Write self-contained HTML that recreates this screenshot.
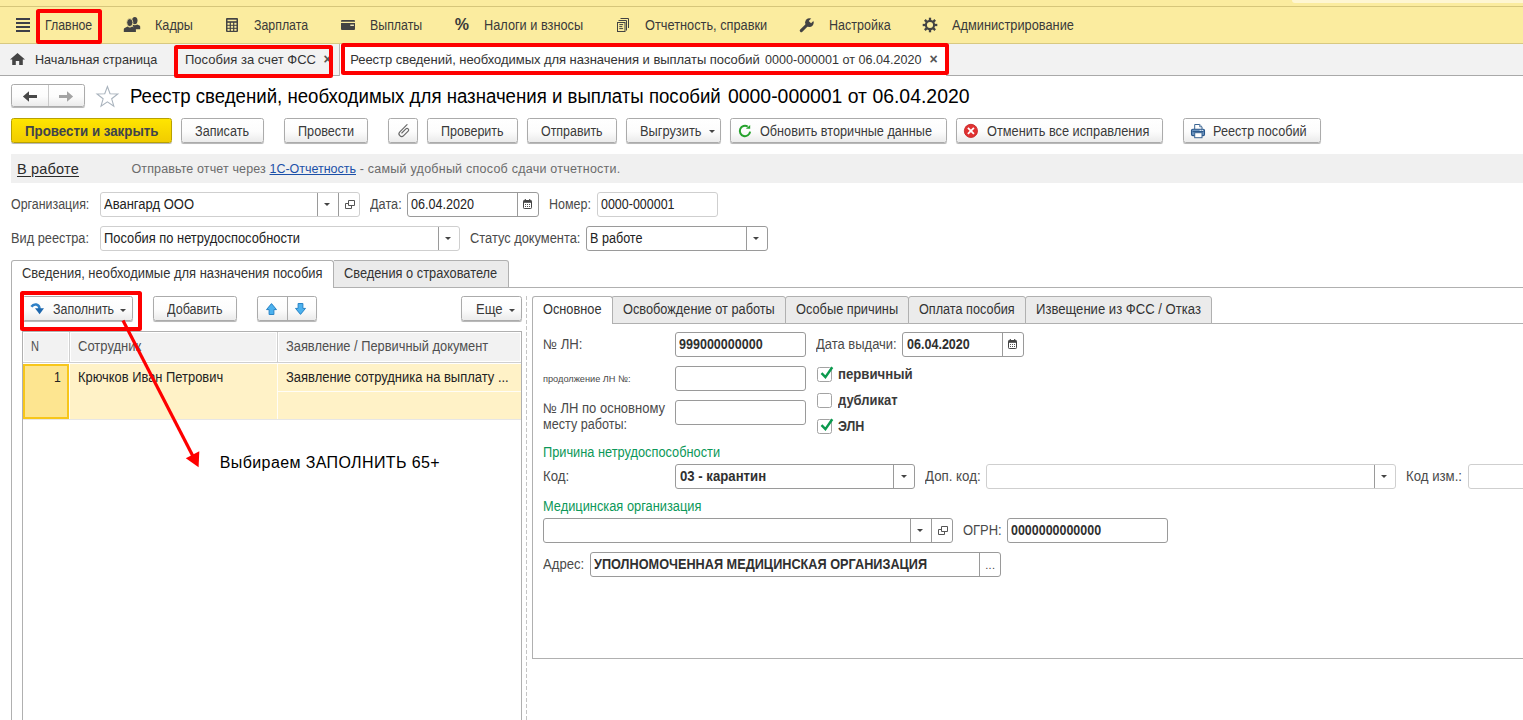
<!DOCTYPE html>
<html lang="ru"><head><meta charset="utf-8"><title>Реестр сведений</title>
<style>
*{box-sizing:border-box;margin:0;padding:0}
html,body{width:1523px;height:720px;overflow:hidden;background:#fff}
body{font-family:"Liberation Sans",Arial,sans-serif;font-size:13px;color:#333;position:relative}
.a{position:absolute;white-space:pre}
.red{border:4px solid #fe0000;border-radius:2.5px}
.btn{border:1px solid #ababab;border-radius:2.5px;background:linear-gradient(#ffffff 0%,#fcfcfc 55%,#ebebeb 100%);box-shadow:0 1px 0 rgba(0,0,0,.2),0 1px 1px rgba(0,0,0,.1)}
.btn.y{background:linear-gradient(#ffe500,#f1cc00);border-color:#b8a100}
.inp{border:1px solid #9a9a9a;border-radius:3px;background:#fff}
.inp.l{border-color:#cfcfcf}
.dv{position:absolute;top:0;bottom:0;width:1px;background:#9a9a9a}
svg{position:absolute;overflow:visible}
</style></head><body>
<div class="a " style="left:0px;top:0px;width:1523px;height:44px;background:#fbec9f"></div>
<div class="a " style="left:0px;top:43px;width:1523px;height:1px;background:#d8c981"></div>
<div class="a " style="left:0px;top:6px;width:1523px;height:1px;background:#d6c67a"></div>
<div class="a " style="left:1292px;top:0px;width:231px;height:3px;background:#fef6d2;border-bottom-left-radius:3px"></div>
<svg class="a" style="left:16px;top:18px" width="14" height="14" viewBox="0 0 14 14"><path d="M0 1h14M0 5h14M0 9h14M0 13h14" stroke="#3d3f48" stroke-width="2" fill="none"/></svg>
<div class="a" style="left:45.2px;top:15px;font-size:14px;line-height:20px;color:#3a3a3a;transform:scaleX(0.8822);transform-origin:0 50%;">Главное</div>
<div class="a" style="left:154.6px;top:15px;font-size:14px;line-height:20px;color:#3a3a3a;transform:scaleX(0.9031);transform-origin:0 50%;">Кадры</div>
<div class="a" style="left:254.4px;top:15px;font-size:14px;line-height:20px;color:#3a3a3a;transform:scaleX(0.8824);transform-origin:0 50%;">Зарплата</div>
<div class="a" style="left:370.2px;top:15px;font-size:14px;line-height:20px;color:#3a3a3a;transform:scaleX(0.8831);transform-origin:0 50%;">Выплаты</div>
<div class="a" style="left:454.7px;top:15px;font-size:16px;line-height:20px;color:#3a3a3a;font-weight:bold;letter-spacing:0.066px;">%</div>
<div class="a" style="left:484.4px;top:15px;font-size:14px;line-height:20px;color:#3a3a3a;transform:scaleX(0.9106);transform-origin:0 50%;">Налоги и взносы</div>
<div class="a" style="left:645.3px;top:15px;font-size:14px;line-height:20px;color:#3a3a3a;transform:scaleX(0.9128);transform-origin:0 50%;">Отчетность, справки</div>
<div class="a" style="left:828.8px;top:15px;font-size:14px;line-height:20px;color:#3a3a3a;transform:scaleX(0.8938);transform-origin:0 50%;">Настройка</div>
<div class="a" style="left:951.7px;top:15px;font-size:14px;line-height:20px;color:#3a3a3a;transform:scaleX(0.9131);transform-origin:0 50%;">Администрирование</div>
<div class="a " style="left:0px;top:44px;width:1523px;height:32px;background:#f2f2f2"></div>
<div class="a " style="left:0px;top:75px;width:1523px;height:1px;background:#a9a9a9"></div>
<div class="a " style="left:339px;top:44px;width:608px;height:32px;background:#fff;border-left:1px solid #b5b5b5;border-right:1px solid #b5b5b5"></div>
<div class="a" style="left:35.4px;top:50px;font-size:13px;line-height:20px;color:#333;transform:scaleX(0.9714);transform-origin:0 50%;">Начальная страница</div>
<div class="a" style="left:185.0px;top:50px;font-size:13px;line-height:20px;color:#333;letter-spacing:0.012px;">Пособия за счет ФСС</div>
<div class="a" style="left:350.2px;top:50px;font-size:13px;line-height:20px;color:#333;letter-spacing:-0.042px;">Реестр сведений, необходимых для назначения и выплаты пособий</div>
<div class="a" style="left:765.1px;top:50px;font-size:13px;line-height:20px;color:#333;transform:scaleX(0.9665);transform-origin:0 50%;">0000-000001 от 06.04.2020</div>
<div class="a" style="left:323.5px;top:49px;font-size:14px;line-height:20px;color:#555;font-weight:bold;">×</div>
<div class="a" style="left:929.5px;top:49px;font-size:14px;line-height:20px;color:#555;font-weight:bold;">×</div>
<div class="a red" style="left:36px;top:9px;width:66px;height:35px;"></div>
<div class="a red" style="left:174px;top:45px;width:159px;height:33px;"></div>
<div class="a red" style="left:341px;top:43px;width:608px;height:32px;"></div>
<div class="a btn" style="left:11px;top:84px;width:74px;height:23px;"><div class="dv" style="left:36px;background:#c9c9c9"></div></div>
<svg class="a" style="left:22px;top:90px" width="16" height="13" viewBox="0 0 16 13"><path d="M.9 6.500L7 1.200V5h8v3H7v3.800z" fill="#484848"/></svg>
<svg class="a" style="left:58px;top:90px" width="16" height="13" viewBox="0 0 16 13"><path d="M15.100 6.500L9 1.200V5H1v3h8v3.800z" fill="#a3a3a3"/></svg>
<svg class="a" style="left:95px;top:84px" width="25" height="24" viewBox="0 0 25 24"><path d="M12.40 2.50L15.05 9.76L22.77 10.03L16.68 14.79L18.81 22.22L12.40 17.90L5.99 22.22L8.12 14.79L2.03 10.03L9.75 9.76Z" stroke="#a9b3bd" stroke-width="1.100" fill="#fff" stroke-linejoin="miter" stroke-miterlimit="10"/></svg>
<div class="a" style="left:130.2px;top:86px;font-size:20px;line-height:20px;color:#000;transform:scaleX(0.9321);transform-origin:0 50%;">Реестр сведений, необходимых для назначения и выплаты пособий</div>
<div class="a" style="left:727.5px;top:86px;font-size:20px;line-height:20px;color:#000;transform:scaleX(0.9701);transform-origin:0 50%;">0000-000001 от 06.04.2020</div>
<div class="a btn y" style="left:11px;top:118px;width:161px;height:25px;"></div>
<div class="a" style="left:25.0px;top:121px;font-size:14px;line-height:20px;color:#40434c;font-weight:bold;transform:scaleX(0.9510);transform-origin:0 50%;">Провести и закрыть</div>
<div class="a btn" style="left:181px;top:118px;width:82.5px;height:25px;"></div>
<div class="a" style="left:195.0px;top:121px;font-size:14px;line-height:20px;color:#3a3a3a;transform:scaleX(0.9026);transform-origin:0 50%;">Записать</div>
<div class="a btn" style="left:284px;top:118px;width:84px;height:25px;"></div>
<div class="a" style="left:298.0px;top:121px;font-size:14px;line-height:20px;color:#3a3a3a;transform:scaleX(0.9041);transform-origin:0 50%;">Провести</div>
<div class="a btn" style="left:388px;top:118px;width:30px;height:25px;"></div>
<div class="a btn" style="left:427px;top:118px;width:91px;height:25px;"></div>
<div class="a" style="left:441.0px;top:121px;font-size:14px;line-height:20px;color:#3a3a3a;transform:scaleX(0.8941);transform-origin:0 50%;">Проверить</div>
<div class="a btn" style="left:527px;top:118px;width:90px;height:25px;"></div>
<div class="a" style="left:541.0px;top:121px;font-size:14px;line-height:20px;color:#3a3a3a;transform:scaleX(0.8873);transform-origin:0 50%;">Отправить</div>
<div class="a btn" style="left:626px;top:118px;width:95px;height:25px;"></div>
<div class="a" style="left:640.0px;top:121px;font-size:14px;line-height:20px;color:#3a3a3a;transform:scaleX(0.9166);transform-origin:0 50%;">Выгрузить</div>
<div class="a btn" style="left:730px;top:118px;width:217px;height:25px;"></div>
<div class="a" style="left:760.2px;top:121px;font-size:14px;line-height:20px;color:#3a3a3a;transform:scaleX(0.9048);transform-origin:0 50%;">Обновить вторичные данные</div>
<div class="a btn" style="left:956px;top:118px;width:207px;height:25px;"></div>
<div class="a" style="left:986.6px;top:121px;font-size:14px;line-height:20px;color:#3a3a3a;transform:scaleX(0.9124);transform-origin:0 50%;">Отменить все исправления</div>
<div class="a btn" style="left:1183px;top:118px;width:138px;height:25px;"></div>
<div class="a" style="left:1213.3px;top:121px;font-size:14px;line-height:20px;color:#3a3a3a;transform:scaleX(0.9065);transform-origin:0 50%;">Реестр пособий</div>
<div class="a " style="left:11px;top:154px;width:1512px;height:29px;background:#f0f0f0"></div>
<div class="a" style="left:17.0px;top:159px;font-size:14.5px;line-height:20px;color:#2b2b2b;letter-spacing:0.197px;text-decoration:underline;text-underline-offset:2px">В работе</div>
<div class="a" style="left:131.5px;top:159px;font-size:12.5px;line-height:20px;color:#6b6b6b;letter-spacing:0.124px;">Отправьте отчет через </div>
<div class="a" style="left:269.5px;top:159px;font-size:12.5px;line-height:20px;color:#1c50a8;letter-spacing:-0.017px;text-decoration:underline">1С-Отчетность</div>
<div class="a" style="left:356.0px;top:159px;font-size:12.5px;line-height:20px;color:#6b6b6b;letter-spacing:0.243px;"> - самый удобный способ сдачи отчетности.</div>
<svg class="a" style="left:123px;top:16px" width="18" height="17" viewBox="0 0 18 17"><g fill="#434343"><ellipse cx="11.8" cy="4.6" rx="2.7" ry="3.600"/><path d="M9.500 8.500c1.500 1 3.300 1 4.600 0l2.400 1.100c.5.300.7.700.7 1.200v2.500h-6.200z"/><ellipse cx="6.800" cy="6.600" rx="3.100" ry="4" stroke="#fbec9f" stroke-width=".8"/><path d="M.8 16v-2.700c0-.7.300-1.100.9-1.400l2.900-1.300c1.400 1.200 3.200 1.200 4.500 0l2.900 1.300c.6.300.9.700.9 1.400V16z"/></g></svg>
<svg class="a" style="left:226px;top:18px" width="12" height="14" viewBox="0 0 12 14"><rect x="0" y="0" width="12" height="14" rx="1" fill="#434343"/><rect x="1.500" y="1.700" width="9" height="1.500" fill="#fbec9f"/><g fill="#fbec9f"><rect x="1.500" y="4.800" width="2.200" height="2"/><rect x="4.900" y="4.800" width="2.200" height="2"/><rect x="8.300" y="4.800" width="2.200" height="2"/><rect x="1.500" y="7.800" width="2.200" height="2"/><rect x="4.900" y="7.800" width="2.200" height="2"/><rect x="8.300" y="7.800" width="2.200" height="2"/><rect x="1.500" y="10.800" width="2.200" height="2"/><rect x="4.900" y="10.800" width="2.200" height="2"/><rect x="8.300" y="10.800" width="2.200" height="2"/></g></svg>
<svg class="a" style="left:341px;top:20px" width="14" height="10" viewBox="0 0 14 10"><path d="M1 0h12a1 1 0 0 1 1 1v.8H0V1a1 1 0 0 1 1-1z" fill="#434343"/><path d="M0 3h14v6a1 1 0 0 1-1 1H1a1 1 0 0 1-1-1z" fill="#434343"/><rect x="9.300" y="4.600" width="3.600" height="1.300" fill="#fff6c8"/></svg>
<svg class="a" style="left:617px;top:18px" width="13" height="14" viewBox="0 0 13 14"><g fill="none" stroke="#434343" stroke-width="1"><rect x=".5" y="4.500" width="7.500" height="9"/><path d="M1.500 2.500h8v10M3.500 .5h8v9.500"/><path d="M2.300 6.600h3.800M2.300 8.600h3M2.300 10.600h3.800" /></g></svg>
<svg class="a" style="left:799px;top:17px" width="16" height="16" viewBox="0 0 16 16"><path d="M2.300 13.700L9 7" stroke="#434343" stroke-width="3.100" stroke-linecap="round"/><circle cx="10.400" cy="5.600" r="4.300" fill="#434343"/><path d="M10.900 5.100L16 0" stroke="#fbec9f" stroke-width="3.300"/></svg>
<svg class="a" style="left:922px;top:17px" width="16" height="16" viewBox="0 0 16 16"><g fill="#434343"><rect x="6.85" y="0.70" width="2.3" height="2.80" transform="rotate(0.0 8 8)"/><rect x="6.85" y="0.70" width="2.3" height="2.80" transform="rotate(45.0 8 8)"/><rect x="6.85" y="0.70" width="2.3" height="2.80" transform="rotate(90.0 8 8)"/><rect x="6.85" y="0.70" width="2.3" height="2.80" transform="rotate(135.0 8 8)"/><rect x="6.85" y="0.70" width="2.3" height="2.80" transform="rotate(180.0 8 8)"/><rect x="6.85" y="0.70" width="2.3" height="2.80" transform="rotate(225.0 8 8)"/><rect x="6.85" y="0.70" width="2.3" height="2.80" transform="rotate(270.0 8 8)"/><rect x="6.85" y="0.70" width="2.3" height="2.80" transform="rotate(315.0 8 8)"/></g><circle cx="8" cy="8" r="4.100" fill="none" stroke="#434343" stroke-width="2.100"/></svg>
<svg class="a" style="left:10px;top:53px" width="15" height="12" viewBox="0 0 15 12"><path d="M7.500 0L0 6.500h2.200V12h3.600V8h3.400v4h3.600V6.500H15z" fill="#454545"/></svg>
<div class="a" style="left:11.0px;top:194px;font-size:14px;line-height:20px;color:#4a4a4a;transform:scaleX(0.8865);transform-origin:0 50%;">Организация:</div>
<div class="a inp l" style="left:100px;top:192px;width:260px;height:25px;"><div class="dv" style="left:216px"></div><div class="dv" style="left:237px"></div></div>
<div class="a" style="left:104.0px;top:194px;font-size:14px;line-height:20px;color:#222;transform:scaleX(0.9286);transform-origin:0 50%;">Авангард ООО</div>
<svg class="a" style="left:324.4px;top:203.0px" width="6" height="3" viewBox="0 0 6 3"><path d="M0 0h6L3.0 3z" fill="#444"/></svg>
<svg class="a" style="left:344.5px;top:199.5px" width="10" height="10" viewBox="0 0 10 10"><path d="M3.500 .5h6v5h-6zM3.500 3.500h-3v5h6v-3" stroke="#555" stroke-width="1" fill="none"/></svg>
<div class="a" style="left:369.8px;top:194px;font-size:14px;line-height:20px;color:#4a4a4a;transform:scaleX(0.9086);transform-origin:0 50%;">Дата:</div>
<div class="a inp" style="left:407px;top:192px;width:132px;height:25px;"><div class="dv" style="left:109px"></div></div>
<div class="a" style="left:411.0px;top:194px;font-size:14px;line-height:20px;color:#222;transform:scaleX(0.8990);transform-origin:0 50%;">06.04.2020</div>
<svg class="a" style="left:523px;top:199.0px" width="9" height="10" viewBox="0 0 9 10"><rect x=".5" y="1.500" width="8" height="8" rx=".8" fill="#fff" stroke="#444"/><rect x=".5" y="1.500" width="8" height="2.300" fill="#444"/><path d="M2.300 0v2M6.700 0v2" stroke="#444" stroke-width="1.100"/><g fill="#555"><rect x="2" y="5" width="1" height="1"/><rect x="4" y="5" width="1" height="1"/><rect x="6" y="5" width="1" height="1"/><rect x="2" y="7" width="1" height="1"/><rect x="4" y="7" width="1" height="1"/><rect x="6" y="7" width="1" height="1"/></g></svg>
<div class="a" style="left:548.9px;top:194px;font-size:14px;line-height:20px;color:#4a4a4a;transform:scaleX(0.8918);transform-origin:0 50%;">Номер:</div>
<div class="a inp l" style="left:597px;top:192px;width:121px;height:25px;"></div>
<div class="a" style="left:601.0px;top:194px;font-size:14px;line-height:20px;color:#222;transform:scaleX(0.8906);transform-origin:0 50%;">0000-000001</div>
<div class="a" style="left:11.0px;top:228px;font-size:14px;line-height:20px;color:#4a4a4a;transform:scaleX(0.9128);transform-origin:0 50%;">Вид реестра:</div>
<div class="a inp l" style="left:100px;top:226px;width:360px;height:25px;"><div class="dv" style="left:337px"></div></div>
<div class="a" style="left:104.0px;top:228px;font-size:14px;line-height:20px;color:#222;transform:scaleX(0.9201);transform-origin:0 50%;">Пособия по нетрудоспособности</div>
<svg class="a" style="left:445.4px;top:237.0px" width="6" height="3" viewBox="0 0 6 3"><path d="M0 0h6L3.0 3z" fill="#444"/></svg>
<div class="a" style="left:470.0px;top:228px;font-size:14px;line-height:20px;color:#4a4a4a;transform:scaleX(0.9176);transform-origin:0 50%;">Статус документа:</div>
<div class="a inp" style="left:586px;top:226px;width:182px;height:25px;"><div class="dv" style="left:159px"></div></div>
<div class="a" style="left:590.0px;top:228px;font-size:14px;line-height:20px;color:#222;transform:scaleX(0.8998);transform-origin:0 50%;">В работе</div>
<svg class="a" style="left:753.4px;top:237.0px" width="6" height="3" viewBox="0 0 6 3"><path d="M0 0h6L3.0 3z" fill="#444"/></svg>
<div class="a " style="left:11px;top:287px;width:1512px;height:1px;background:#b0b0b0"></div>
<div class="a " style="left:11px;top:287px;width:1px;height:433px;background:#b0b0b0"></div>
<div class="a " style="left:334px;top:260px;width:175px;height:28px;background:#ebebeb;border:1px solid #b0b0b0;border-left:none;border-top-right-radius:3px"></div>
<div class="a " style="left:11px;top:260px;width:323px;height:28px;background:#fff;border:1px solid #b0b0b0;border-bottom:none;border-radius:3px 3px 0 0"></div>
<div class="a" style="left:22.0px;top:263px;font-size:14px;line-height:20px;color:#333;transform:scaleX(0.9252);transform-origin:0 50%;">Сведения, необходимые для назначения пособия</div>
<div class="a" style="left:344.3px;top:263px;font-size:14px;line-height:20px;color:#333;transform:scaleX(0.9150);transform-origin:0 50%;">Сведения о страхователе</div>
<div class="a btn" style="left:22px;top:296px;width:111px;height:25px;"></div>
<div class="a" style="left:52.7px;top:299px;font-size:14px;line-height:20px;color:#3a3a3a;transform:scaleX(0.8889);transform-origin:0 50%;">Заполнить</div>
<svg class="a" style="left:120.0px;top:309.0px" width="6" height="3" viewBox="0 0 6 3"><path d="M0 0h6L3.0 3z" fill="#444"/></svg>
<div class="a btn" style="left:153px;top:296px;width:83.5px;height:25px;"></div>
<div class="a" style="left:166.7px;top:299px;font-size:14px;line-height:20px;color:#3a3a3a;transform:scaleX(0.8970);transform-origin:0 50%;">Добавить</div>
<div class="a btn" style="left:257px;top:296px;width:60px;height:25px;"><div class="dv" style="left:29px;background:#ababab"></div></div>
<div class="a btn" style="left:461px;top:296px;width:61px;height:25px;"></div>
<div class="a" style="left:475.6px;top:299px;font-size:14px;line-height:20px;color:#3a3a3a;transform:scaleX(0.9333);transform-origin:0 50%;">Еще</div>
<svg class="a" style="left:509.20000000000005px;top:309.0px" width="6" height="3" viewBox="0 0 6 3"><path d="M0 0h6L3.0 3z" fill="#444"/></svg>
<svg class="a" style="left:30px;top:302px" width="15" height="13" viewBox="0 0 15 13"><path d="M1.400 4.800C3.800 1.300 9.300 1.600 9.600 7" stroke="#2f80c6" stroke-width="2.500" fill="none"/><path d="M5 6.300h9L9.600 12.200z" fill="#1f68ae"/></svg>
<svg class="a" style="left:266px;top:303px" width="11" height="12" viewBox="0 0 11 12"><path d="M5.500 .6L10.500 6.600H7.900V11.500H3.100V6.600H.5z" fill="#4bb1ee" stroke="#2a84c6" stroke-width="1" stroke-linejoin="miter"/></svg>
<svg class="a" style="left:295px;top:303px" width="11" height="12" viewBox="0 0 11 12"><path d="M5.500 .6L10.500 6.600H7.900V11.500H3.100V6.600H.5z" transform="rotate(180 5.500 6)" fill="#4bb1ee" stroke="#2a84c6" stroke-width="1" stroke-linejoin="miter"/></svg>
<div class="a " style="left:22px;top:331px;width:500px;height:389px;border:1px solid #b0b0b0;border-bottom:none;background:#fff"></div>
<div class="a " style="left:23px;top:332px;width:46px;height:30px;background:#f2f2f2;border:1px solid #fff"></div>
<div class="a " style="left:70px;top:332px;width:207px;height:30px;background:#f2f2f2;border:1px solid #fff"></div>
<div class="a " style="left:278px;top:332px;width:243px;height:30px;background:#f2f2f2;border:1px solid #fff"></div>
<div class="a " style="left:23px;top:362px;width:498px;height:1px;background:#cfcfcf"></div>
<div class="a " style="left:69px;top:332px;width:1px;height:31px;background:#cfcfcf"></div>
<div class="a " style="left:277px;top:332px;width:1px;height:31px;background:#cfcfcf"></div>
<div class="a" style="left:31.2px;top:336px;font-size:14px;line-height:20px;color:#4f4f4f;transform:scaleX(0.7901);transform-origin:0 50%;">N</div>
<div class="a" style="left:77.8px;top:336px;font-size:14px;line-height:20px;color:#4f4f4f;transform:scaleX(0.9292);transform-origin:0 50%;">Сотрудник</div>
<div class="a" style="left:286.2px;top:336px;font-size:14px;line-height:20px;color:#4f4f4f;transform:scaleX(0.9181);transform-origin:0 50%;">Заявление / Первичный документ</div>
<div class="a " style="left:23px;top:364px;width:498px;height:55px;background:#fff2c7"></div>
<div class="a " style="left:23px;top:419px;width:498px;height:1px;background:#e6e6e6"></div>
<div class="a " style="left:69px;top:364px;width:1px;height:55px;background:#fffdf6"></div>
<div class="a " style="left:277px;top:364px;width:1px;height:55px;background:#fffdf6"></div>
<div class="a " style="left:278px;top:391px;width:243px;height:1px;background:#fffdf6"></div>
<div class="a " style="left:23px;top:364px;width:46px;height:55px;background:#fde590;border:2px solid #f7c61a"></div>
<div class="a" style="left:54.0px;top:367px;font-size:14px;line-height:20px;color:#222;transform:scaleX(0.8721);transform-origin:0 50%;">1</div>
<div class="a" style="left:78.2px;top:367px;font-size:14px;line-height:20px;color:#222;transform:scaleX(0.9213);transform-origin:0 50%;">Крючков Иван Петрович</div>
<div class="a" style="left:286.2px;top:367px;font-size:14px;line-height:20px;color:#222;transform:scaleX(0.9262);transform-origin:0 50%;">Заявление сотрудника на выплату ...</div>
<div class="a " style="left:526px;top:296px;width:1px;height:424px;background:repeating-linear-gradient(#c4c4c4 0 4px,#fff 4px 6px)"></div>
<div class="a " style="left:532px;top:323px;width:991px;height:336px;border:1px solid #b0b0b0;border-right:none;background:#fff"></div>
<div class="a " style="left:611px;top:296px;width:174.5px;height:28px;background:#ebebeb;border:1px solid #b0b0b0;border-radius:3px 3px 0 0"></div>
<div class="a" style="left:622.7px;top:299px;font-size:14px;line-height:20px;color:#333;transform:scaleX(0.9118);transform-origin:0 50%;">Освобождение от работы</div>
<div class="a " style="left:784.5px;top:296px;width:124.0px;height:28px;background:#ebebeb;border:1px solid #b0b0b0;border-radius:3px 3px 0 0"></div>
<div class="a" style="left:795.7px;top:299px;font-size:14px;line-height:20px;color:#333;transform:scaleX(0.9142);transform-origin:0 50%;">Особые причины</div>
<div class="a " style="left:907.5px;top:296px;width:118.0px;height:28px;background:#ebebeb;border:1px solid #b0b0b0;border-radius:3px 3px 0 0"></div>
<div class="a" style="left:919.0px;top:299px;font-size:14px;line-height:20px;color:#333;transform:scaleX(0.9047);transform-origin:0 50%;">Оплата пособия</div>
<div class="a " style="left:1024.5px;top:296px;width:187.0px;height:28px;background:#ebebeb;border:1px solid #b0b0b0;border-radius:3px 3px 0 0"></div>
<div class="a" style="left:1035.8px;top:299px;font-size:14px;line-height:20px;color:#333;transform:scaleX(0.9349);transform-origin:0 50%;">Извещение из ФСС / Отказ</div>
<div class="a " style="left:532px;top:296px;width:80.5px;height:28px;background:#fff;border:1px solid #b0b0b0;border-bottom:none;border-radius:3px 3px 0 0"></div>
<div class="a" style="left:543.0px;top:299px;font-size:14px;line-height:20px;color:#333;transform:scaleX(0.9118);transform-origin:0 50%;">Основное</div>
<div class="a" style="left:543.0px;top:334px;font-size:14px;line-height:20px;color:#4a4a4a;transform:scaleX(0.9380);transform-origin:0 50%;">№ ЛН:</div>
<div class="a inp" style="left:675px;top:332px;width:131px;height:25px;"></div>
<div class="a" style="left:678.5px;top:334px;font-size:14px;line-height:20px;color:#303030;font-weight:bold;transform:scaleX(0.8958);transform-origin:0 50%;">999000000000</div>
<div class="a" style="left:815.6px;top:334px;font-size:14px;line-height:20px;color:#4a4a4a;transform:scaleX(0.9271);transform-origin:0 50%;">Дата выдачи:</div>
<div class="a inp" style="left:902px;top:332px;width:122px;height:25px;"><div class="dv" style="left:99px"></div></div>
<div class="a" style="left:906.9px;top:334px;font-size:14px;line-height:20px;color:#303030;font-weight:bold;transform:scaleX(0.8961);transform-origin:0 50%;">06.04.2020</div>
<svg class="a" style="left:1008px;top:339.0px" width="9" height="10" viewBox="0 0 9 10"><rect x=".5" y="1.500" width="8" height="8" rx=".8" fill="#fff" stroke="#444"/><rect x=".5" y="1.500" width="8" height="2.300" fill="#444"/><path d="M2.300 0v2M6.700 0v2" stroke="#444" stroke-width="1.100"/><g fill="#555"><rect x="2" y="5" width="1" height="1"/><rect x="4" y="5" width="1" height="1"/><rect x="6" y="5" width="1" height="1"/><rect x="2" y="7" width="1" height="1"/><rect x="4" y="7" width="1" height="1"/><rect x="6" y="7" width="1" height="1"/></g></svg>
<div class="a" style="left:543.0px;top:369px;font-size:9.5px;line-height:20px;color:#4a4a4a;transform:scaleX(0.9685);transform-origin:0 50%;">продолжение ЛН №:</div>
<div class="a inp" style="left:675px;top:366px;width:131px;height:25px;"></div>
<div class="a" style="left:543.0px;top:398px;font-size:14px;line-height:20px;color:#4a4a4a;transform:scaleX(0.9284);transform-origin:0 50%;">№ ЛН по основному</div>
<div class="a" style="left:543.0px;top:414px;font-size:14px;line-height:20px;color:#4a4a4a;transform:scaleX(0.9002);transform-origin:0 50%;">месту работы:</div>
<div class="a inp" style="left:675px;top:400px;width:131px;height:25px;"></div>
<div class="a " style="left:817px;top:367px;width:15px;height:15px;border:1px solid #a3a3a3;border-radius:2.5px;background:#fff"><svg style="left:2px;top:-2px" width="14" height="14" viewBox="0 0 14 14"><path d="M1.500 7.200l3.900 3.900L12.300 1.200" stroke="#0b9a4e" stroke-width="2.400" fill="none"/></svg></div>
<div class="a " style="left:817px;top:393px;width:15px;height:15px;border:1px solid #a3a3a3;border-radius:2.5px;background:#fff"></div>
<div class="a " style="left:817px;top:419px;width:15px;height:15px;border:1px solid #a3a3a3;border-radius:2.5px;background:#fff"><svg style="left:2px;top:-2px" width="14" height="14" viewBox="0 0 14 14"><path d="M1.500 7.200l3.900 3.900L12.300 1.200" stroke="#0b9a4e" stroke-width="2.400" fill="none"/></svg></div>
<div class="a" style="left:838.3px;top:364px;font-size:14px;line-height:20px;color:#3a3a3a;font-weight:bold;transform:scaleX(0.9424);transform-origin:0 50%;">первичный</div>
<div class="a" style="left:838.3px;top:390px;font-size:14px;line-height:20px;color:#3a3a3a;font-weight:bold;transform:scaleX(0.9254);transform-origin:0 50%;">дубликат</div>
<div class="a" style="left:838.3px;top:416px;font-size:14px;line-height:20px;color:#3a3a3a;font-weight:bold;transform:scaleX(0.8953);transform-origin:0 50%;">ЭЛН</div>
<div class="a" style="left:543.2px;top:442px;font-size:14px;line-height:20px;color:#0c9859;transform:scaleX(0.9135);transform-origin:0 50%;">Причина нетрудоспособности</div>
<div class="a" style="left:543.2px;top:466px;font-size:14px;line-height:20px;color:#4a4a4a;transform:scaleX(0.9457);transform-origin:0 50%;">Код:</div>
<div class="a inp" style="left:675px;top:464px;width:240px;height:25px;"><div class="dv" style="left:217px"></div></div>
<div class="a" style="left:679.7px;top:466px;font-size:14px;line-height:20px;color:#303030;font-weight:bold;transform:scaleX(0.9407);transform-origin:0 50%;">03 - карантин</div>
<svg class="a" style="left:900.5px;top:475.0px" width="6" height="3" viewBox="0 0 6 3"><path d="M0 0h6L3.0 3z" fill="#444"/></svg>
<div class="a" style="left:924.9px;top:466px;font-size:14px;line-height:20px;color:#4a4a4a;transform:scaleX(0.9487);transform-origin:0 50%;">Доп. код:</div>
<div class="a inp l" style="left:986px;top:464px;width:410px;height:25px;"><div class="dv" style="left:387px"></div></div>
<svg class="a" style="left:1381.4px;top:475.0px" width="6" height="3" viewBox="0 0 6 3"><path d="M0 0h6L3.0 3z" fill="#444"/></svg>
<div class="a" style="left:1406.2px;top:466px;font-size:14px;line-height:20px;color:#4a4a4a;transform:scaleX(0.9437);transform-origin:0 50%;">Код изм.:</div>
<div class="a inp l" style="left:1468px;top:464px;width:92px;height:25px;"></div>
<div class="a" style="left:543.2px;top:496px;font-size:14px;line-height:20px;color:#0c9859;transform:scaleX(0.9162);transform-origin:0 50%;">Медицинская организация</div>
<div class="a inp" style="left:543px;top:518px;width:410px;height:25px;"><div class="dv" style="left:366px"></div><div class="dv" style="left:387px"></div></div>
<svg class="a" style="left:917.4px;top:529.0px" width="6" height="3" viewBox="0 0 6 3"><path d="M0 0h6L3.0 3z" fill="#444"/></svg>
<svg class="a" style="left:937.5px;top:525.5px" width="10" height="10" viewBox="0 0 10 10"><path d="M3.500 .5h6v5h-6zM3.500 3.500h-3v5h6v-3" stroke="#555" stroke-width="1" fill="none"/></svg>
<div class="a" style="left:963.0px;top:520px;font-size:14px;line-height:20px;color:#4a4a4a;transform:scaleX(0.9256);transform-origin:0 50%;">ОГРН:</div>
<div class="a inp" style="left:1007px;top:518px;width:161px;height:25px;"></div>
<div class="a" style="left:1011.4px;top:520px;font-size:14px;line-height:20px;color:#303030;font-weight:bold;transform:scaleX(0.8900);transform-origin:0 50%;">0000000000000</div>
<div class="a" style="left:543.2px;top:554px;font-size:14px;line-height:20px;color:#4a4a4a;transform:scaleX(0.9370);transform-origin:0 50%;">Адрес:</div>
<div class="a inp" style="left:590px;top:552px;width:411px;height:25px;"><div class="dv" style="left:388px"></div></div>
<div class="a" style="left:594.3px;top:554px;font-size:14px;line-height:20px;color:#303030;font-weight:bold;transform:scaleX(0.9074);transform-origin:0 50%;">УПОЛНОМОЧЕННАЯ МЕДИЦИНСКАЯ ОРГАНИЗАЦИЯ</div>
<div class="a" style="left:985.3px;top:555px;font-size:11px;line-height:20px;color:#444;letter-spacing:.25px;">...</div>
<svg class="a" style="left:0;top:0" width="1523" height="720" viewBox="0 0 1523 720"><path d="M123 320.600L193.500 457.200" stroke="#fe0000" stroke-width="3.200" fill="none"/><path d="M198.600 467.200L185.800 458.200 199.300 451.300z" fill="#fe0000"/></svg>
<div class="a" style="left:219.8px;top:453px;font-size:16px;line-height:20px;color:#000;letter-spacing:0.384px;">Выбираем ЗАПОЛНИТЬ 65+</div>
<div class="a red" style="left:20px;top:291px;width:122px;height:40px;"></div>
<svg class="a" style="left:396.5px;top:124px" width="14" height="15" viewBox="-7 -7.500 14 15"><g transform="rotate(45)"><path d="M-2.700 -7V3.200A2.700 2.700 0 0 0 2.700 3.200V-3.200A1.600 1.600 0 0 0 -.5 -3.200V2.600" stroke="#6a6a6a" stroke-width="1.200" fill="none" stroke-linecap="round"/></g></svg>
<svg class="a" style="left:708.8px;top:130.0px" width="6" height="3" viewBox="0 0 6 3"><path d="M0 0h6L3.0 3z" fill="#444"/></svg>
<svg class="a" style="left:738px;top:124px" width="14" height="14" viewBox="0 0 14 14"><path d="M12.100 7.600A5.150 5.150 0 1 1 9.700 2.600" stroke="#25a22c" stroke-width="2" fill="none"/><path d="M12.200 1v3.700H7.900z" fill="#25a22c"/></svg>
<svg class="a" style="left:963px;top:123px" width="16" height="16" viewBox="0 0 16 16"><circle cx="7.900" cy="7.900" r="6.600" fill="#e03232" stroke="#c41d1d" stroke-width=".8"/><path d="M4.900 4.900l6 6M10.900 4.900l-6 6" stroke="#fff" stroke-width="1.800"/></svg>
<svg class="a" style="left:1190px;top:123px" width="16" height="16" viewBox="0 0 16 16"><path d="M4.700 6V1.500h5l2.300 2.300V6" fill="#fff" stroke="#3b6592" stroke-width="1"/><path d="M9.700 1.500v2.300H12" fill="#c9d6e4" stroke="#3b6592" stroke-width=".8"/><rect x="1.500" y="6.300" width="13" height="6.300" rx="1.300" fill="#6e97c2" stroke="#28568a" stroke-width="1.100"/><path d="M2.500 8.600h11" stroke="#28568a" stroke-width="1.100"/><rect x="4.700" y="9.700" width="7.300" height="5" fill="#fff" stroke="#3b6592" stroke-width="1"/><rect x="9.700" y="6.900" width="1.100" height="1" fill="#fff"/><rect x="11.700" y="6.900" width="1.100" height="1" fill="#fff"/></svg>
</body></html>
